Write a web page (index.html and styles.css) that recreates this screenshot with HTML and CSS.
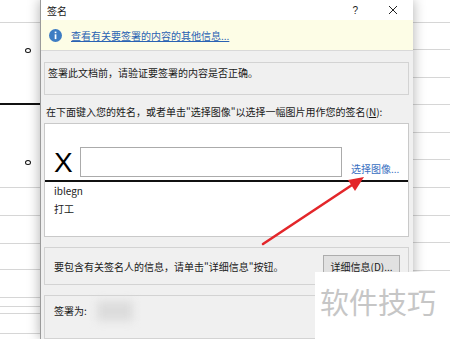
FILE: index.html
```html
<!DOCTYPE html>
<html lang="zh-CN">
<head>
<meta charset="utf-8">
<title>签名</title>
<link rel="stylesheet" href="styles.css">
</head>
<body>
<div class="doc">
  <div class="doc-left">
    <div class="row h22"></div>
    <div class="row h80 dark"><span class="bullet b1"></span></div>
    <div class="row h82"><span class="bullet b2"></span></div>
    <div class="row h27"></div>
    <div class="row h27"></div>
    <div class="row h25"></div>
    <div class="row h27"></div>
    <div class="row h8"></div>
    <div class="row h6"></div>
    <div class="row h19"></div>
  </div>
  <div class="doc-right">
    <div class="row h22"></div>
    <div class="row h26"></div>
    <div class="row h27"></div>
    <div class="row h26"></div>
    <div class="row h27"></div>
    <div class="row h26"></div>
    <div class="row h27"></div>
    <div class="row h27"></div>
    <div class="row h26"></div>
    <div class="row h27"></div>
    <div class="row h26"></div>
  </div>
</div>

<div class="dialog">
  <div class="titlebar">
    <span class="title">签名</span>
    <span class="help">?</span>
    <svg class="close" width="10" height="10" viewBox="0 0 10 10"><path d="M1 1L9 9M9 1L1 9" stroke="#222" stroke-width="1"/></svg>
  </div>
  <div class="infobar">
    <svg class="info-icon" width="13" height="13" viewBox="0 0 13 13">
      <circle cx="6.5" cy="6.5" r="6.5" fill="#3d7cc3"/>
      <rect x="5.7" y="5.3" width="1.7" height="4.8" fill="#fff"/>
      <rect x="5.7" y="2.6" width="1.7" height="1.6" fill="#fff"/>
    </svg>
    <a class="link">查看有关要签署的内容的其他信息...</a>
  </div>
  <div class="content">
    <div class="group notice">签署此文档前，请验证要签署的内容是否正确。</div>
    <div class="label">在下面键入您的姓名，或者单击"选择图像"以选择一幅图片用作您的签名(<u>N</u>):</div>
    <div class="sigbox">
      <div class="sigrow">
        <span class="xmark">X</span>
        <div class="input"></div>
        <a class="select">选择图像...</a>
      </div>
      <div class="sigline"></div>
      <div class="signer">iblegn</div>
      <div class="signer">打工</div>
    </div>
    <div class="group details">
      <span>要包含有关签名人的信息，请单击"详细信息"按钮。</span>
      <span class="btn">详细信息(<u>D</u>)...</span>
    </div>
    <div class="group signas">
      <span>签署为:</span>
      <span class="blur"></span>
    </div>
  </div>
</div>

<svg class="arrow" width="450" height="339" viewBox="0 0 450 339">
  <line x1="263" y1="244" x2="352" y2="185" stroke="#e3262a" stroke-width="2.6" stroke-linecap="round"/>
  <polygon points="364,177 348,180 355,191" fill="#e3262a"/>
</svg>

<div class="watermark">软件技巧</div>
</body>
</html>
```

FILE: styles.css
```css
* { box-sizing: border-box; }

body {
  margin: 0;
  width: 450px;
  height: 339px;
  overflow: hidden;
  position: relative;
  background: #fff;
  font-family: "Noto Sans CJK SC", "Microsoft YaHei", sans-serif;
  font-size: 10px;
  color: #1a1a1a;
}

/* background document */
.doc {
  display: flex;
  justify-content: space-between;
  height: 339px;
  overflow: hidden;
}
.doc-left { width: 40px; }
.doc-right { width: 37px; }
.row {
  border-bottom: 1px solid #d6d6d6;
  display: flex;
}
.row.dark { border-bottom: 2px solid #111; }
.h6 { height: 7px; }
.h8 { height: 9px; }
.h19 { height: 20px; }
.h22 { height: 23px; }
.h25 { height: 26px; }
.h26 { height: 27px; }
.h27 { height: 28px; }
.h80 { height: 82px; }
.h82 { height: 83px; }
.bullet {
  width: 6px;
  height: 5px;
  border: 1px solid #111;
  border-radius: 50%;
  margin-left: 25px;
}
.b1 { margin-top: 25px; }
.b2 { margin-top: 55px; }

/* dialog */
.dialog {
  position: absolute;
  left: 40px;
  top: 0;
  bottom: 0;
  width: 373px;
  overflow: hidden;
  background: #f0f0f0;
  border-left: 1px solid #9a9a9a;
  box-shadow: 0 0 12px rgba(0, 0, 0, 0.32);
}
.titlebar {
  height: 20px;
  background: #fff;
  display: flex;
  align-items: center;
  padding-left: 6px;
}
.title { font-size: 10px; }
.help {
  margin-left: auto;
  margin-right: 30px;
  font-family: "Liberation Sans", sans-serif;
  font-size: 10px;
}
.close { margin-right: 15px; }

.infobar {
  height: 31px;
  background: #fdfde6;
  border-bottom: 1px solid #d9d9d9;
  display: flex;
  align-items: center;
  padding-left: 8px;
}
.info-icon { margin-right: 9px; }
.link {
  color: #2a62b3;
  text-decoration: underline;
  font-size: 10px;
}

.content {
  padding: 11px 4px 0 3px;
}
.group {
  border: 1px solid #d3d3d3;
  background: #f0f0f0;
}
.notice {
  height: 33px;
  padding: 3px 0 0 3px;
  line-height: 14px;
}
.label {
  margin-top: 10px;
  line-height: 14px;
  padding-left: 2px;
}
.sigbox {
  margin-top: 4px;
  height: 114px;
  background: #fff;
  border: 1px solid #c9c9c9;
}
.sigrow {
  margin-top: 23px;
  height: 30px;
  display: flex;
  align-items: flex-end;
  padding-left: 9px;
}
.xmark {
  font-family: "Liberation Sans", sans-serif;
  font-size: 28px;
  line-height: 28px;
  color: #000;
  width: 26px;
}
.input {
  width: 262px;
  height: 30px;
  border: 1px solid #ababab;
  background: #fff;
}
.select {
  margin-left: 9px;
  color: #3a6fc1;
  line-height: 14px;
  margin-bottom: 1px;
}
.sigline {
  margin-top: 3px;
  height: 2px;
  background: #111;
}
.signer {
  line-height: 18px;
  padding-left: 9px;
}
.signer:first-of-type { margin-top: 1px; }

.details {
  margin-top: 10px;
  height: 38px;
  display: flex;
  align-items: center;
  padding: 0 8px 0 9px;
}
.btn {
  margin-left: auto;
  width: 77px;
  height: 22px;
  background: #e1e1e1;
  border: 1px solid #adadad;
  display: flex;
  align-items: center;
  justify-content: center;
}
.signas {
  margin-top: 10px;
  height: 44px;
  display: flex;
  align-items: flex-start;
  padding: 8px 0 0 9px;
  line-height: 14px;
}
.blur {
  width: 36px;
  height: 20px;
  margin-left: 10px;
  margin-top: -3px;
  background: #dcdcdc;
  filter: blur(4px);
}

/* overlays */
.arrow {
  position: absolute;
  left: 0;
  top: 0;
}
.watermark {
  position: absolute;
  left: 315px;
  top: 272px;
  width: 135px;
  height: 67px;
  overflow: hidden;
  background: #fff;
  color: #c6c6c6;
  font-size: 29px;
  line-height: 36px;
  padding: 11px 0 0 5px;
}
```
